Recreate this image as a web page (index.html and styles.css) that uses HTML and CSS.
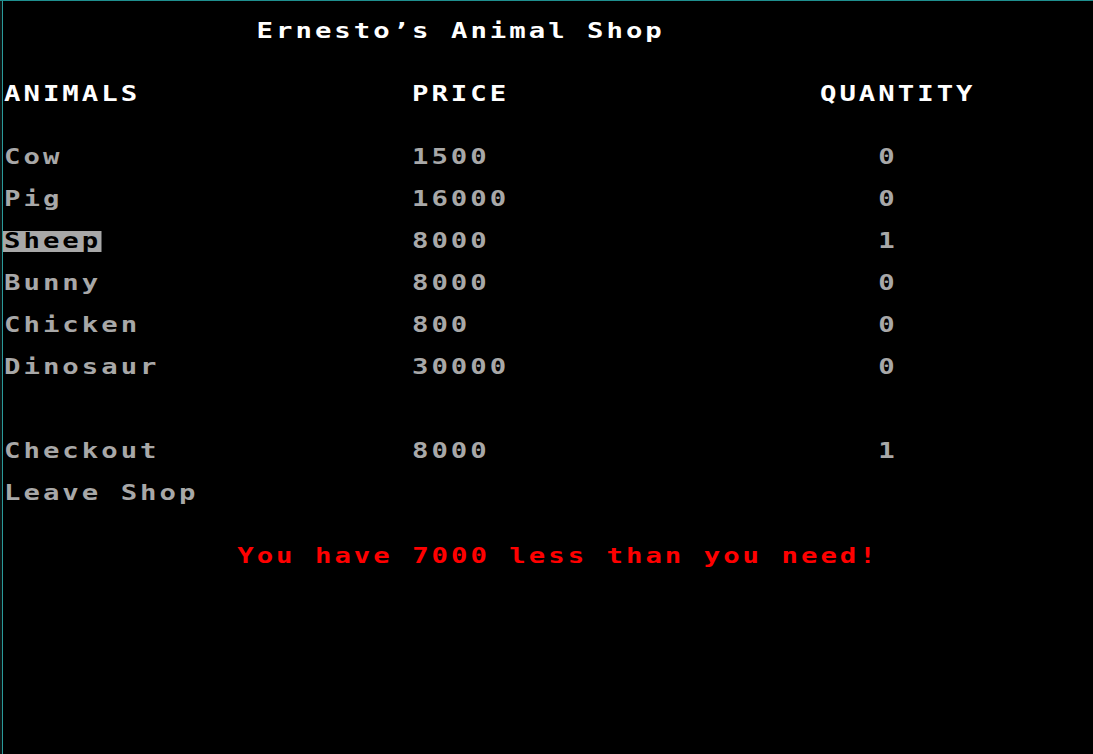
FILE: index.html
```html
<!DOCTYPE html>
<html lang="en">
<head>
<meta charset="utf-8">
<title>Ernesto’s Animal Shop</title>
<link rel="stylesheet" href="styles.css">
</head>
<body>
<main class="screen">
  <div class="content">
    <h1 class="title">Ernesto’s Animal Shop</h1>
    <div class="row head">
      <span class="col">ANIMALS</span>
      <span class="col">PRICE</span>
      <span class="col">QUANTITY</span>
    </div>
    <div class="list">
      <div class="row"><span class="col">Cow</span><span class="col">1500</span><span class="col qty">0</span></div>
      <div class="row"><span class="col">Pig</span><span class="col">16000</span><span class="col qty">0</span></div>
      <div class="row"><span class="col"><span class="sel">Sheep</span></span><span class="col">8000</span><span class="col qty">1</span></div>
      <div class="row"><span class="col">Bunny</span><span class="col">8000</span><span class="col qty">0</span></div>
      <div class="row"><span class="col">Chicken</span><span class="col">800</span><span class="col qty">0</span></div>
      <div class="row"><span class="col">Dinosaur</span><span class="col">30000</span><span class="col qty">0</span></div>
    </div>
    <div class="list actions">
      <div class="row"><span class="col">Checkout</span><span class="col">8000</span><span class="col qty">1</span></div>
      <div class="row"><span class="col">Leave Shop</span></div>
    </div>
    <p class="message">You have 7000 less than you need!</p>
  </div>
</main>
</body>
</html>
```

FILE: styles.css
```css
html, body {
  margin: 0;
  padding: 0;
  background: #000;
  height: 100%;
}

body {
  border-top: 1px solid #1f8f8f;
  box-sizing: border-box;
  padding-left: 2px;
  background: #000;
  box-shadow: inset 2px 0 0 #0c1414;
}

.screen {
  box-sizing: border-box;
  min-height: 100%;
  border-left: 1px solid #2a9a9a;
  padding-top: 20px;
  padding-left: 1px;
  overflow: hidden;
}

.content {
  transform: scaleX(1.3);
  transform-origin: left top;
  font-family: "DejaVu Sans Mono", "Liberation Mono", monospace;
  font-weight: bold;
  font-size: 21px;
  letter-spacing: 2.31px;
  line-height: 21px;
  color: #a8a8a8;
  display: flex;
  flex-direction: column;
}

.title {
  margin: 0;
  font-size: inherit;
  font-weight: bold;
  line-height: 21px;
  color: #fff;
  padding-left: 194.3px;
}

.row {
  display: flex;
  height: 21px;
  white-space: pre;
}

.col {
  flex: 0 0 313.85px;
}

.col:last-child {
  flex: 1 1 auto;
}

.head {
  margin-top: 42px;
  color: #fff;
}

.list {
  display: flex;
  flex-direction: column;
  gap: 21px;
  margin-top: 42px;
}

.actions {
  margin-top: 63px;
}

.qty {
  padding-left: 44.85px;
}

.sel {
  background: #a8a8a8;
  color: #000;
  display: inline-block;
  margin-left: -1px;
  padding-left: 1px;
}

.message {
  margin: 42px 0 0;
  padding-left: 179.4px;
  color: #ff0000;
  line-height: 21px;
}
```
